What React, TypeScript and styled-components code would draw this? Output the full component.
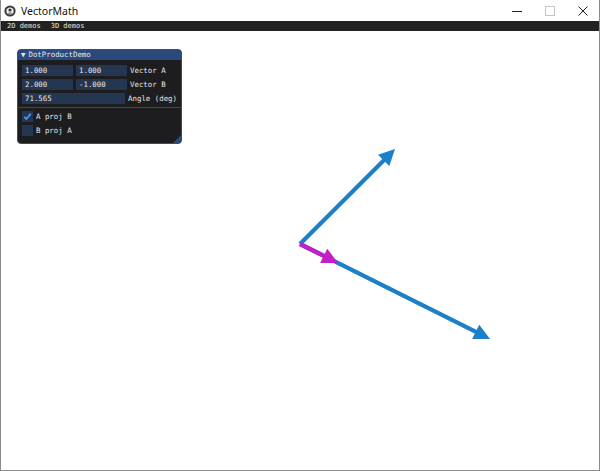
import React from "react";
import styled, { createGlobalStyle } from "styled-components";

const Global = createGlobalStyle`
  html, body { margin: 0; padding: 0; background: #ffffff; overflow: hidden; }
  #root { width: 600px; height: 471px; }
`;

const Frame = styled.div`
  width: 600px;
  height: 471px;
  box-sizing: border-box;
  display: flex;
  flex-direction: column;
  border: 1px solid #8c8c8c;
  border-top: none;
  background: #fff;
`;

const TitleBar = styled.div`
  height: 21px;
  flex: 0 0 21px;
  display: flex;
  align-items: center;
  background: #fff;
  font-family: "Noto Sans", "Open Sans", sans-serif;
  font-size: 10.5px;
  color: #111;
`;

const AppIcon = styled.svg`
  width: 12px;
  height: 12px;
  margin: 0 5px 0 3px;
`;

const TitleText = styled.span`
  flex: 1;
`;

const Controls = styled.div`
  display: flex;
  height: 100%;
`;

const CtrlBtn = styled.div`
  width: 33px;
  height: 100%;
  display: flex;
  align-items: center;
  justify-content: center;
`;

const MenuBar = styled.div`
  height: 10px;
  flex: 0 0 10px;
  background: #222222;
  display: flex;
  align-items: center;
  gap: 10px;
  padding-left: 6px;
  font-family: "DejaVu Sans Mono", "Liberation Mono", monospace;
  font-size: 7px;
  color: #e4e4e4;
  line-height: 10px;
`;

const Canvas = styled.div`
  flex: 1;
  position: relative;
  background: #fff;
`;

const Drawing = styled.svg`
  position: absolute;
  left: 0;
  top: 0;
`;

const Panel = styled.div`
  position: absolute;
  left: 16px;
  top: 18px;
  width: 165px;
  height: 95px;
  box-sizing: border-box;
  background: #1d1d1f;
  border: 1px solid #4a4a55;
  border-radius: 4px;
  overflow: hidden;
  display: flex;
  flex-direction: column;
  font-family: "DejaVu Sans Mono", "Liberation Mono", monospace;
  font-size: 7.4px;
  color: #e6e6e6;
`;

const PanelTitle = styled.div`
  height: 10px;
  flex: 0 0 10px;
  background: #294a7a;
  display: flex;
  align-items: center;
  padding-left: 3px;
  gap: 3px;
  line-height: 10px;
`;

const PanelBody = styled.div`
  padding: 5px 4px 0 4px;
  display: flex;
  flex-direction: column;
  gap: 3px;
`;

const Row = styled.div`
  display: flex;
  align-items: center;
  height: 11px;
  gap: 3px;
`;

const Field = styled.div<{ $w: number }>`
  width: ${(p) => p.$w}px;
  height: 11px;
  background: #243650;
  display: flex;
  align-items: center;
  padding-left: 3px;
  box-sizing: border-box;
`;

const Label = styled.span`
  white-space: nowrap;
`;

const Separator = styled.div`
  height: 1px;
  background: #45454f;
  margin: 0 -4px;
`;

const Box = styled.div`
  width: 11px;
  height: 11px;
  background: #243650;
  display: flex;
  align-items: center;
  justify-content: center;
`;

const Grip = styled.div`
  position: absolute;
  right: 0;
  bottom: 0;
  width: 0;
  height: 0;
  border-left: 8px solid transparent;
  border-bottom: 8px solid #2c4a74;
`;

type Vec = { x: number; y: number };

const Arrow: React.FC<{ from: Vec; to: Vec; color: string }> = ({ from, to, color }) => {
  const dx = to.x - from.x;
  const dy = to.y - from.y;
  const len = Math.hypot(dx, dy);
  const ux = dx / len;
  const uy = dy / len;
  const head = 16;
  const half = 8;
  const bx = to.x - ux * head;
  const by = to.y - uy * head;
  const px = -uy;
  const py = ux;
  const pts = `${to.x},${to.y} ${bx + px * half},${by + py * half} ${bx - px * half},${by - py * half}`;
  return (
    <g>
      <line x1={from.x} y1={from.y} x2={bx + ux * 2} y2={by + uy * 2} stroke={color} strokeWidth={4.2} />
      <polygon points={pts} fill={color} />
    </g>
  );
};

const Check = () => (
  <svg width="9" height="9" viewBox="0 0 9 9">
    <polyline points="1.2,4.8 3.4,7 7.8,1.6" fill="none" stroke="#4296fa" strokeWidth="1.8" />
  </svg>
);

export default function App() {
  const scale = 95;
  const origin = { x: 300, y: 244 };
  const toScreen = (x: number, y: number) => ({ x: origin.x + x * scale, y: origin.y - y * scale });
  const a = toScreen(1, 1);
  const b = toScreen(2, -1);
  const p = toScreen(0.4, -0.2);

  return (
    <>
      <Global />
      <Frame>
        <TitleBar>
          <AppIcon viewBox="0 0 12 12">
            <circle cx="6" cy="6" r="5.6" fill="#3a3a3a" />
            <circle cx="6" cy="6" r="3.6" fill="#f0f0f0" />
            <circle cx="6" cy="5" r="1.6" fill="#3a3a3a" />
            <path d="M3.4 8.6 Q6 6.2 8.6 8.6" fill="#3a3a3a" />
          </AppIcon>
          <TitleText>VectorMath</TitleText>
          <Controls>
            <CtrlBtn>
              <svg width="10" height="10" viewBox="0 0 10 10">
                <line x1="0" y1="5.5" x2="10" y2="5.5" stroke="#222" strokeWidth="1" />
              </svg>
            </CtrlBtn>
            <CtrlBtn>
              <svg width="10" height="10" viewBox="0 0 10 10">
                <rect x="0.5" y="0.5" width="9" height="9" fill="none" stroke="#c4c4c4" strokeWidth="1" />
              </svg>
            </CtrlBtn>
            <CtrlBtn>
              <svg width="10" height="10" viewBox="0 0 10 10">
                <path d="M0.5 0.5 L9.5 9.5 M9.5 0.5 L0.5 9.5" stroke="#222" strokeWidth="1" />
              </svg>
            </CtrlBtn>
          </Controls>
        </TitleBar>
        <MenuBar>
          <span>2D demos</span>
          <span>3D demos</span>
        </MenuBar>
        <Canvas>
          <Drawing width="598" height="439" viewBox="1 31 598 439">
            <Arrow from={origin} to={a} color="#1b7fc9" />
            <Arrow from={origin} to={b} color="#1b7fc9" />
            <Arrow from={origin} to={p} color="#c21fc6" />
          </Drawing>
          <Panel>
            <PanelTitle>
              <span>▼</span>
              <span>DotProductDemo</span>
            </PanelTitle>
            <PanelBody>
              <Row>
                <Field $w={51}>1.000</Field>
                <Field $w={51}>1.000</Field>
                <Label>Vector A</Label>
              </Row>
              <Row>
                <Field $w={51}>2.000</Field>
                <Field $w={51}>-1.000</Field>
                <Label>Vector B</Label>
              </Row>
              <Row>
                <Field $w={105}>71.565</Field>
                <Label>Angle (deg)</Label>
              </Row>
              <Separator />
              <Row>
                <Box>
                  <Check />
                </Box>
                <Label>A proj B</Label>
              </Row>
              <Row>
                <Box />
                <Label>B proj A</Label>
              </Row>
            </PanelBody>
            <Grip />
          </Panel>
        </Canvas>
      </Frame>
    </>
  );
}
